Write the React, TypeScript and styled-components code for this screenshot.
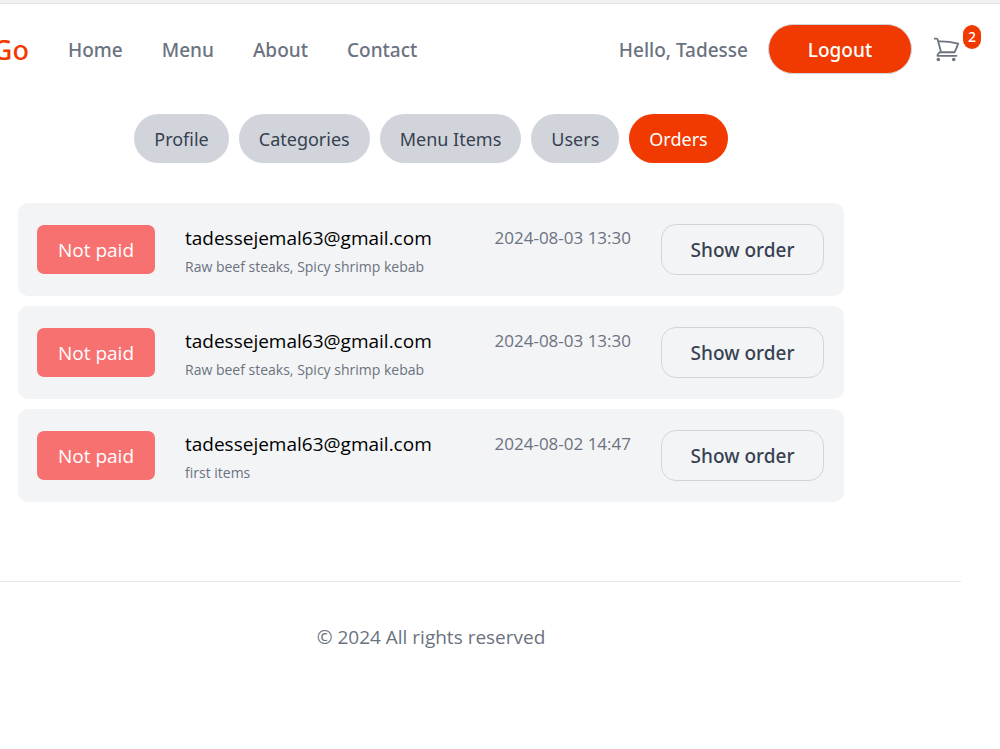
import React from "react";
import styled, { createGlobalStyle } from "styled-components";

const labelFont = `"Noto Sans", "Open Sans", sans-serif`;

const GlobalStyle = createGlobalStyle`
  *, *::before, *::after { box-sizing: border-box; }
  body {
    margin: 0;
    background: #fff;
    color: #000;
    font-family: "Open Sans", "Noto Sans", sans-serif;
    font-size: 19px;
    line-height: 28px;
    overflow-x: hidden;
  }
  button { font: inherit; cursor: pointer; }
  a { color: inherit; text-decoration: none; }
`;

const TopEdge = styled.div`
  height: 4px;
  background: #f1f1f2;
  border-bottom: 1px solid #e4e4e6;
`;

const Page = styled.div`
  margin: 0 39px 0 -99px;
`;

const Header = styled.header`
  display: flex;
  align-items: center;
  justify-content: space-between;
  padding-top: 20px;
  color: #6b7280;
  font-family: ${labelFont};
  font-weight: 500;
`;

const Nav = styled.nav`
  display: flex;
  align-items: center;
  gap: 39px;
  padding-top: 2px;
`;

const Logo = styled.a`
  width: 128px;
  text-align: right;
  color: #f13a01;
  font-size: 27px;
`;

const Account = styled.div`
  display: flex;
  align-items: center;
  gap: 20px;
`;

const Greeting = styled.a`
  padding-top: 2px;
`;

const LogoutButton = styled.button`
  width: 144px;
  height: 50px;
  padding: 2px 0 0;
  border: 1px solid #d1d5db;
  border-radius: 25px;
  background: #f13a01;
  color: #fff;
`;

const CartLink = styled.a`
  position: relative;
  display: flex;
`;

const CartBadge = styled.span`
  position: absolute;
  top: -10px;
  right: -20px;
  padding: 4px 5px;
  border-radius: 12px;
  background: #f13a01;
  color: #fff;
  font-size: 14px;
  line-height: 16px;
`;

const Tabs = styled.nav`
  display: flex;
  justify-content: center;
  gap: 10px;
  margin-top: 40px;
  font-family: ${labelFont};
  font-size: 18px;
`;

const Tab = styled.a<{ $active?: boolean }>`
  padding: 11px 20px 10px;
  border-radius: 25px;
  background: ${(p) => (p.$active ? "#f13a01" : "#d1d5db")};
  color: ${(p) => (p.$active ? "#fff" : "#374151")};
`;

const OrderList = styled.main`
  display: flex;
  flex-direction: column;
  gap: 10px;
  max-width: 826px;
  margin: 40px auto 0;
`;

const OrderRow = styled.article`
  display: flex;
  align-items: center;
  gap: 30px;
  padding: 14px 20px 14px 19px;
  border-radius: 10px;
  background: #f3f4f6;
`;

const Status = styled.div`
  width: 118px;
  padding: 11px 0 10px;
  border-radius: 7px;
  background: #f87171;
  color: #fff;
  text-align: center;
`;

const Details = styled.div`
  flex: 1;
  padding-top: 7px;
`;

const DetailsTop = styled.div`
  display: flex;
  justify-content: space-between;
`;

const OrderTime = styled.time`
  color: #6b7280;
  font-size: 17px;
`;

const Items = styled.div`
  color: #6b7280;
  font-size: 14px;
  line-height: 30px;
`;

const ShowLink = styled.button`
  width: 163px;
  padding: 11px 0 10px;
  border: 1px solid #d1d5db;
  border-radius: 15px;
  background: transparent;
  color: #374151;
  font-family: ${labelFont};
  font-weight: 500;
`;

const Footer = styled.footer`
  margin-top: 79px;
  padding: 41px 0;
  border-top: 1px solid #e5e7eb;
  color: #6b7280;
  text-align: center;
`;

const navLinks = ["Home", "Menu", "About", "Contact"];
const tabs = ["Profile", "Categories", "Menu Items", "Users", "Orders"];
const orders = [
  { id: 1, email: "tadessejemal63@gmail.com", items: "Raw beef steaks, Spicy shrimp kebab", time: "2024-08-03 13:30" },
  { id: 2, email: "tadessejemal63@gmail.com", items: "Raw beef steaks, Spicy shrimp kebab", time: "2024-08-03 13:30" },
  { id: 3, email: "tadessejemal63@gmail.com", items: "first items", time: "2024-08-02 14:47" },
];

const CartIcon = () => (
  <svg width="29" height="29" viewBox="0 0 24 24" fill="none" stroke="currentColor" strokeWidth="1.5" strokeLinecap="round" strokeLinejoin="round" aria-hidden="true">
    <path d="M2.25 3h1.386c.51 0 .955.343 1.087.835l.383 1.437M7.5 14.25a3 3 0 0 0-3 3h15.75m-12.75-3h11.218c1.121-2.3 2.1-4.684 2.924-7.138a60.114 60.114 0 0 0-16.536-1.84M7.5 14.25 5.106 5.272M6 20.25a.75.75 0 1 1-1.5 0 .75.75 0 0 1 1.5 0Zm12.75 0a.75.75 0 1 1-1.5 0 .75.75 0 0 1 1.5 0Z" />
  </svg>
);

export default function App() {
  return (
    <>
      <GlobalStyle />
      <TopEdge />
      <Page>
        <Header>
          <Nav>
            <Logo href="#">Go</Logo>
            {navLinks.map((label) => (
              <a key={label} href="#">{label}</a>
            ))}
          </Nav>
          <Account>
            <Greeting href="#">Hello, Tadesse</Greeting>
            <LogoutButton type="button">Logout</LogoutButton>
            <CartLink href="#" aria-label="Cart">
              <CartIcon />
              <CartBadge>2</CartBadge>
            </CartLink>
          </Account>
        </Header>
        <Tabs>
          {tabs.map((label) => (
            <Tab key={label} href="#" $active={label === "Orders"}>{label}</Tab>
          ))}
        </Tabs>
        <OrderList>
          {orders.map((order) => (
            <OrderRow key={order.id}>
              <Status>Not paid</Status>
              <Details>
                <DetailsTop>
                  <span>{order.email}</span>
                  <OrderTime>{order.time}</OrderTime>
                </DetailsTop>
                <Items>{order.items}</Items>
              </Details>
              <ShowLink type="button">Show order</ShowLink>
            </OrderRow>
          ))}
        </OrderList>
        <Footer>© 2024 All rights reserved</Footer>
      </Page>
    </>
  );
}
